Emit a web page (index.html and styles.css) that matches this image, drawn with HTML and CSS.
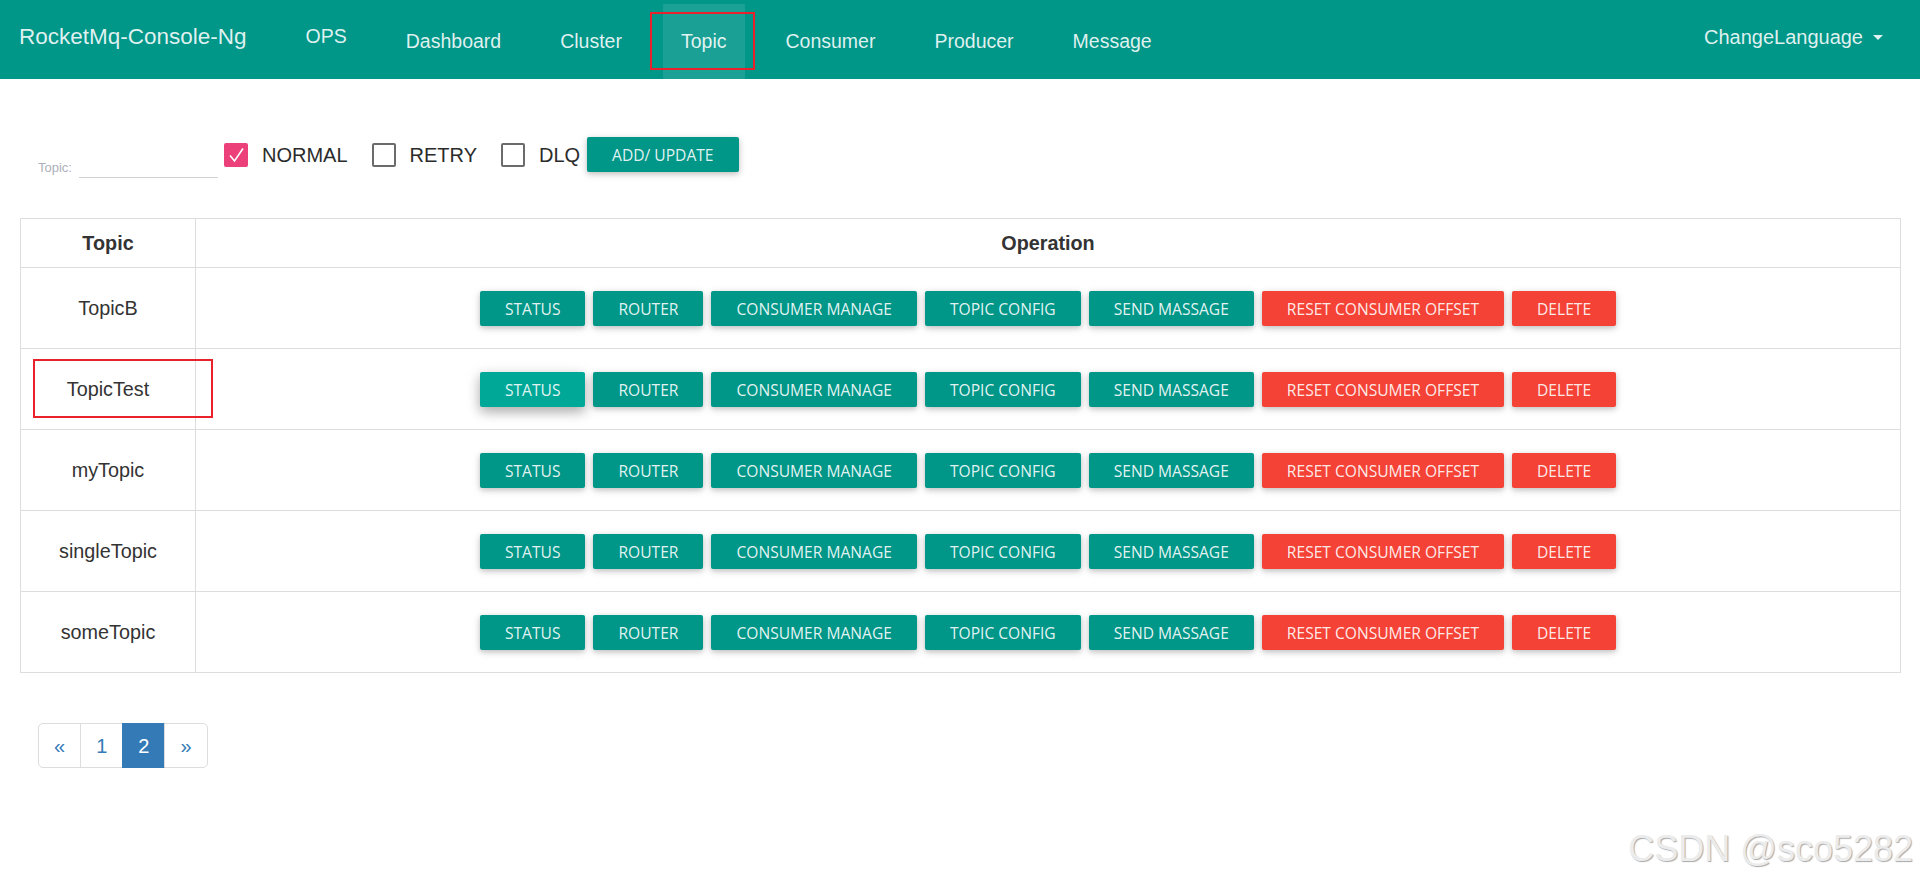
FILE: index.html
```html
<!DOCTYPE html>
<html lang="en">
<head>
<meta charset="utf-8">
<title>RocketMq-Console-Ng</title>
<link rel="stylesheet" href="styles.css">
</head>
<body>
<header class="navbar">
  <a class="brand">RocketMq-Console-Ng</a>
  <ul class="nav">
    <li class="nav-item ops"><a>OPS</a></li>
    <li class="nav-item"><a>Dashboard</a></li>
    <li class="nav-item"><a>Cluster</a></li>
    <li class="nav-item active"><a>Topic</a></li>
    <li class="nav-item"><a>Consumer</a></li>
    <li class="nav-item"><a>Producer</a></li>
    <li class="nav-item"><a>Message</a></li>
  </ul>
  <div class="lang">ChangeLanguage<span class="caret"></span></div>
</header>

<main class="page">
  <div class="filter">
    <div class="field">
      <label class="field-label">Topic:</label>
      <span class="field-input"></span>
    </div>
    <label class="check">
      <span class="box checked"><svg width="24" height="24" viewBox="0 0 24 24"><polyline points="6,12.5 10.5,18 19,5.5" fill="none" stroke="#fff" stroke-width="1.6"/></svg></span>NORMAL
    </label>
    <label class="check"><span class="box"></span>RETRY</label>
    <label class="check"><span class="box"></span>DLQ</label>
    <button class="btn add">ADD/ UPDATE</button>
  </div>

  <table class="topics">
    <colgroup><col class="col-name"><col></colgroup>
    <thead>
      <tr><th>Topic</th><th>Operation</th></tr>
    </thead>
    <tbody>
      <tr>
        <td>TopicB</td>
        <td class="op"><div class="actions">
          <button class="btn">STATUS</button><button class="btn">ROUTER</button><button class="btn">CONSUMER MANAGE</button><button class="btn">TOPIC CONFIG</button><button class="btn">SEND MASSAGE</button><button class="btn danger">RESET CONSUMER OFFSET</button><button class="btn danger">DELETE</button>
        </div></td>
      </tr>
      <tr>
        <td>TopicTest</td>
        <td class="op"><div class="actions">
          <button class="btn hover">STATUS</button><button class="btn">ROUTER</button><button class="btn">CONSUMER MANAGE</button><button class="btn">TOPIC CONFIG</button><button class="btn">SEND MASSAGE</button><button class="btn danger">RESET CONSUMER OFFSET</button><button class="btn danger">DELETE</button>
        </div></td>
      </tr>
      <tr>
        <td>myTopic</td>
        <td class="op"><div class="actions">
          <button class="btn">STATUS</button><button class="btn">ROUTER</button><button class="btn">CONSUMER MANAGE</button><button class="btn">TOPIC CONFIG</button><button class="btn">SEND MASSAGE</button><button class="btn danger">RESET CONSUMER OFFSET</button><button class="btn danger">DELETE</button>
        </div></td>
      </tr>
      <tr>
        <td>singleTopic</td>
        <td class="op"><div class="actions">
          <button class="btn">STATUS</button><button class="btn">ROUTER</button><button class="btn">CONSUMER MANAGE</button><button class="btn">TOPIC CONFIG</button><button class="btn">SEND MASSAGE</button><button class="btn danger">RESET CONSUMER OFFSET</button><button class="btn danger">DELETE</button>
        </div></td>
      </tr>
      <tr>
        <td>someTopic</td>
        <td class="op"><div class="actions">
          <button class="btn">STATUS</button><button class="btn">ROUTER</button><button class="btn">CONSUMER MANAGE</button><button class="btn">TOPIC CONFIG</button><button class="btn">SEND MASSAGE</button><button class="btn danger">RESET CONSUMER OFFSET</button><button class="btn danger">DELETE</button>
        </div></td>
      </tr>
    </tbody>
  </table>

  <ul class="pagination">
    <li><a>&laquo;</a></li>
    <li><a>1</a></li>
    <li class="active"><a>2</a></li>
    <li><a>&raquo;</a></li>
  </ul>
</main>

<div class="mark mark-nav"></div>
<div class="mark mark-row"></div>
<div class="watermark">CSDN @sco5282</div>
</body>
</html>
```

FILE: styles.css
```css
html, body {
  margin: 0;
  padding: 0;
}
body {
  position: relative;
  min-height: 879px;
  background: #fff;
  font-family: "Liberation Sans", Arial, sans-serif;
  color: #333;
}

/* ---------- navbar ---------- */
.navbar {
  display: flex;
  height: 79px;
  background: #009688;
  color: rgba(255, 255, 255, 0.88);
}
.brand {
  padding: 26px 0 0 19px;
  margin-right: 41px;
  font-size: 22.5px;
  line-height: 22.5px;
  white-space: nowrap;
}
.nav {
  display: flex;
  gap: 23px;
  margin: 0;
  padding: 4px 0 0;
  list-style: none;
}
.nav-item {
  padding: 27px 18px 0;
  font-size: 19.5px;
  line-height: 20px;
  white-space: nowrap;
}
.nav-item.ops {
  padding-top: 22px;
}
.nav-item.active {
  background: rgba(255, 255, 255, 0.1);
}
.lang {
  margin-left: auto;
  padding: 27px 37px 0 0;
  font-size: 20px;
  line-height: 20px;
  white-space: nowrap;
}
.caret {
  display: inline-block;
  width: 0;
  height: 0;
  margin-left: 10px;
  vertical-align: 4px;
  border-top: 5px solid rgba(255, 255, 255, 0.88);
  border-left: 5px solid transparent;
  border-right: 5px solid transparent;
}

/* ---------- page ---------- */
.page {
  padding: 58px 19px 0 20px;
}

.filter {
  display: flex;
  align-items: center;
  height: 35px;
  padding-left: 18px;
}
.field {
  display: flex;
  align-items: flex-end;
  align-self: flex-end;
  margin-bottom: -6px;
}
.field-label {
  font-size: 13px;
  line-height: 14px;
  color: #adb0bb;
  margin-bottom: 3px;
}
.field-input {
  display: block;
  width: 139px;
  height: 24px;
  margin-left: 7px;
  border-bottom: 1px solid #d0d0d0;
}
.check {
  display: flex;
  align-items: center;
  font-size: 20px;
  line-height: 24px;
  color: #2b2b2b;
  margin-left: 6px;
}
.check + .check {
  margin-left: 24px;
}
.box {
  display: block;
  box-sizing: border-box;
  width: 24px;
  height: 24px;
  margin-right: 14px;
  border: 2px solid #6b6b6b;
  border-radius: 2px;
}
.box.checked {
  border: 0;
  background: #ec407a;
}
.box svg {
  display: block;
}

.btn {
  height: 35px;
  padding: 0 25px;
  border: 0;
  border-radius: 2px;
  background: #009688;
  color: rgba(255, 255, 255, 0.9);
  font-family: "Open Sans", "Noto Sans", sans-serif;
  font-size: 15.6px;
  white-space: nowrap;
  text-transform: uppercase;
  box-shadow: 0 2px 5px 0 rgba(0, 0, 0, 0.16), 0 2px 10px 0 rgba(0, 0, 0, 0.12);
}
.btn.add {
  margin-left: 7px;
}
.btn.danger {
  background: #f44336;
}
.btn.hover {
  background: #00a898;
  box-shadow: 0 5px 11px 0 rgba(0, 0, 0, 0.2), 0 4px 15px 0 rgba(0, 0, 0, 0.17);
}

/* ---------- table ---------- */
.topics {
  width: 100%;
  margin-top: 46px;
  border-collapse: collapse;
  table-layout: fixed;
}
.col-name {
  width: 175px;
}
.topics th,
.topics td {
  border: 1px solid #ddd;
  text-align: center;
  vertical-align: middle;
  font-size: 19.8px;
  line-height: 28px;
  padding: 10px;
}
.topics th {
  font-weight: bold;
  color: #333;
}
.topics td {
  color: #333;
}
.topics td.op {
  padding: 23px 10px 22px;
}
.actions {
  display: flex;
  justify-content: center;
  gap: 8px;
}

/* ---------- pagination ---------- */
.pagination {
  display: flex;
  margin: 50px 0 0 18px;
  padding: 0;
  list-style: none;
}
.pagination a {
  display: block;
  padding: 7.5px 15px;
  margin-left: -1px;
  font-size: 20px;
  line-height: 28px;
  color: #337ab7;
  border: 1px solid #ddd;
}
.pagination li:first-child a {
  margin-left: 0;
  border-radius: 5px 0 0 5px;
}
.pagination li:last-child a {
  border-radius: 0 5px 5px 0;
}
.pagination .active a {
  background: #337ab7;
  border-color: #337ab7;
  color: #fff;
}

/* ---------- overlays ---------- */
.mark {
  position: absolute;
  box-sizing: border-box;
  border: 2px solid #e8212b;
}
.mark-nav {
  left: 650px;
  top: 12px;
  width: 105px;
  height: 58px;
}
.mark-row {
  left: 33px;
  top: 359px;
  width: 180px;
  height: 59px;
}
.watermark {
  position: absolute;
  right: 7px;
  top: 831px;
  font-size: 36px;
  line-height: 36px;
  color: #ececec;
  text-shadow: 1px 1px 1px #a8a8a8, -1px -1px 0 #ffffff;
  white-space: nowrap;
}
```
